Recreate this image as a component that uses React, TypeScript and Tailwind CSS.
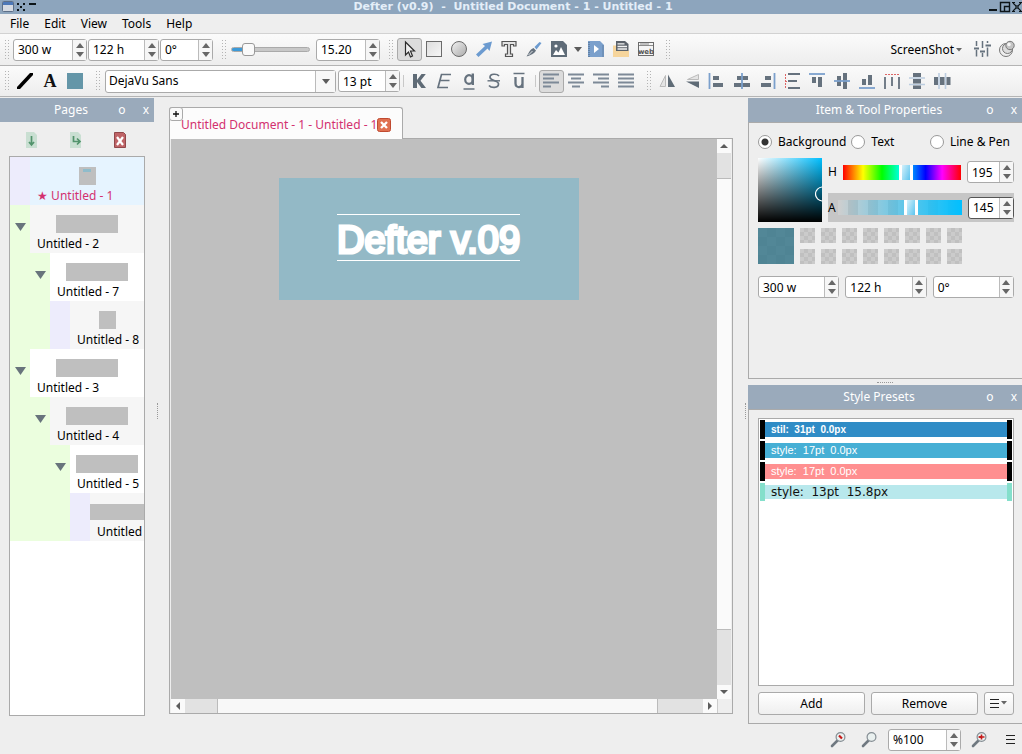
import type { ReactNode } from "react";

const STEEL = "#66727e";
const BLUE = "#7ba0cc";

function Grip() {
  return (
    <svg width="5" height="28" viewBox="0 0 5 28" className="shrink-0" aria-hidden="true">
      {[4, 7, 10, 13, 16, 19, 22].map((y) => (
        <g key={y} fill="#b4b4b4">
          <rect x="0" y={y} width="1" height="1" />
          <rect x="3" y={y} width="1" height="1" />
        </g>
      ))}
    </svg>
  );
}

function Spin({ value, label, className = "", focused = false }: { value: string; label: string; className?: string; focused?: boolean }) {
  return (
    <div className={`flex h-[22px] shrink-0 rounded-[3px] border bg-white ${focused ? "border-[#555]" : "border-[#aaa]"} ${className}`}>
      <input aria-label={label} defaultValue={value} className="w-0 min-w-0 flex-1 bg-transparent pt-px pl-1 text-xs outline-none" />
      <div className="flex w-3.5 flex-col border-l border-[#bbb] bg-[#f6f6f6]">
        <button aria-label={`Increase ${label}`} className="flex flex-1 items-end justify-center pb-[2px]">
          <svg width="8" height="5" viewBox="0 0 8 5"><path d="M4 0 8 5H0z" fill="#666" /></svg>
        </button>
        <button aria-label={`Decrease ${label}`} className="flex flex-1 items-start justify-center pt-[2px]">
          <svg width="8" height="5" viewBox="0 0 8 5"><path d="M0 0h8L4 5z" fill="#666" /></svg>
        </button>
      </div>
    </div>
  );
}

function Tool({ label, active = false, children }: { label: string; active?: boolean; children: ReactNode }) {
  return (
    <button
      aria-label={label}
      className={`flex h-[23px] w-[25px] shrink-0 items-center justify-center rounded-[3px] border ${active ? "border-[#aaa] bg-[#dcdcdc]" : "border-transparent"}`}
    >
      <svg width="19" height="19" viewBox="0 0 19 19" className="shrink-0">{children}</svg>
    </button>
  );
}

function Separator() {
  return <div className="mx-[3px] h-3 w-px shrink-0 bg-[#c8c8c8]" />;
}

function Caret() {
  return <svg width="8" height="5" viewBox="0 0 8 5" className="shrink-0"><path d="M0 0h8L4 5z" fill="#5c5c5c" /></svg>;
}

function TitleBar() {
  return (
    <header className="flex h-3.5 items-center bg-[#8da5bd]">
      <div className="flex w-20 items-center pl-[2px]">
        <svg width="36" height="14" viewBox="0 0 36 14">
          <rect x="0.5" y="1.5" width="11" height="10" rx="1" fill="#d4dae2" stroke="#5c6f88" />
          <rect x="1" y="2" width="10" height="3" fill="#4c78b8" />
          <g fill="#0c1418">
            <path d="M15 3h2v2h-2zM21 3h2v2h-2zM18 6h2v2h-2zM15 9h2v2h-2zM21 9h2v2h-2zM27 3h7v2h-7z" />
          </g>
        </svg>
      </div>
      <h1 className="flex-1 text-center font-['DejaVu_Sans',sans-serif] text-[11px] leading-[14px] font-bold whitespace-pre text-[#e4eef8]">
        {"Defter (v0.9)  -  Untitled Document - 1 - Untitled - 1"}
      </h1>
      <div className="flex w-[76px] justify-end">
        <svg width="33" height="14" viewBox="0 0 33 14" fill="none" stroke="#0c1418">
          <path d="M0 10h8" strokeWidth="2" />
          <path d="M11.500 2.500h9v9h-9zM15.500 11V6.500h5" strokeWidth="1.400" />
          <path d="m24 3 8 8m0-8-8 8" strokeWidth="1.200" />
          <path d="M23 2.500h3M30 2.500h3M23 11.500h3M30 11.500h3" />
          <rect x="27" y="6" width="2" height="2" fill="#8da5bd" />
        </svg>
      </div>
    </header>
  );
}

function MenuBar() {
  return (
    <nav className="flex h-5 items-center gap-[15px] border-b border-[#d2d2d2] pl-2.5 text-xs">
      {["File", "Edit", "View", "Tools", "Help"].map((m) => (
        <button key={m}>{m}</button>
      ))}
    </nav>
  );
}

const barClass = "flex items-center border-b border-[#b4b4b4] bg-linear-to-b from-[#fbfbfb] to-[#ededed] pl-[5px]";

function MainToolbar() {
  return (
    <div className={`h-8 ${barClass}`}>
      <Grip />
      <div className="ml-[3px] flex gap-px">
        <Spin value="300 w" label="Width" className="w-[74px]" />
        <Spin value="122 h" label="Height" className="w-[71px]" />
        <Spin value="0°" label="Rotation" className="w-[53px]" />
      </div>
      <div className="ml-[9px] flex items-center">
        <Grip />
        <input
          type="range"
          aria-label="Scale"
          min={0}
          max={100}
          step={0.1}
          defaultValue={15.2}
          className="ml-1 h-3.5 w-[79px] appearance-none bg-transparent [&::-webkit-slider-runnable-track]:h-[5px] [&::-webkit-slider-runnable-track]:rounded-full [&::-webkit-slider-runnable-track]:border [&::-webkit-slider-runnable-track]:border-[#aaa] [&::-webkit-slider-runnable-track]:bg-[linear-gradient(90deg,#3c9ad8_15px,#c8c8c8_15px)] [&::-webkit-slider-thumb]:-mt-[5px] [&::-webkit-slider-thumb]:h-[13px] [&::-webkit-slider-thumb]:w-[13px] [&::-webkit-slider-thumb]:appearance-none [&::-webkit-slider-thumb]:rounded-[3px] [&::-webkit-slider-thumb]:border [&::-webkit-slider-thumb]:border-[#999] [&::-webkit-slider-thumb]:bg-[#fafafa]"
        />
      </div>
      <Spin value="15.20" label="Scale value" className="ml-1.5 w-16" />
      <div className="ml-[9px] flex items-center gap-[3px]">
        <Grip />
        <div className="flex items-center">
          <Tool label="Select" active>
            <path d="M5.500 2v13l3-3 2 5 2-1-2-5h4z" fill="#f0f0f0" stroke="#2c2c2c" strokeWidth="1.200" />
          </Tool>
          <Tool label="Rectangle">
            <defs><linearGradient id="sq" x2="1" y2="1"><stop stopColor="#ddd" /><stop offset="1" stopColor="#f6f6f6" /></linearGradient></defs>
            <rect x="1.500" y="1.500" width="15" height="15" fill="url(#sq)" stroke="#6b6b6b" />
          </Tool>
          <Tool label="Ellipse">
            <defs><linearGradient id="ci" y2="1" x2="1"><stop stopColor="#f2f2f2" /><stop offset="1" stopColor="#aaa" /></linearGradient></defs>
            <circle cx="9" cy="9" r="7.500" fill="url(#ci)" stroke="#6b6b6b" />
          </Tool>
          <Tool label="Arrow">
            <path d="m1 14.500 9-8.500-2.500-2L17 1.500 14.500 11l-2-2.500-9 8.500z" fill="#6c9bd0" />
          </Tool>
          <Tool label="Text">
            <path d="M2 1.500h14V6h-2.500V4.500h-3v9.500h2v2.500h-7V14h2V4.500h-3V6H2z" fill="#e4e4e4" stroke="#555" strokeWidth="1.200" />
          </Tool>
          <Tool label="Brush">
            <path d="M9.500 7 14.500 2l2 1-5 6.500z" fill="#6c9bd0" />
            <path d="M8.500 8l2.500 2.500C9 14 6 15 1.500 16.500 4 13 4.500 9.500 8.500 8z" fill={STEEL} />
            <path d="M3.500 15 7.500 11" stroke="#fff" strokeWidth=".8" />
          </Tool>
          <Tool label="Image">
            <path d="M1 1h12l4 4v12H1z" fill="#5f6c78" />
            <circle cx="6" cy="6" r="1.600" fill="#fff" />
            <path d="m3 15 3-5 2.500 2.500L11 7l4 8z" fill="#fff" />
          </Tool>
          <button aria-label="Image options" className="flex h-5 w-3 items-center justify-center"><Caret /></button>
          <Tool label="Video">
            <path d="M1 1h12l4 4v12H1z" fill={BLUE} />
            <path d="M7 5v8l5-4z" fill="#fff" />
            <path d="M2 2v15M16 5.500v11" stroke="#4c6480" strokeDasharray="1 1" />
          </Tool>
          <Tool label="Document">
            <path d="M1 5.500h3v5h13V17H1z" fill="#f6d59c" />
            <path d="M4 1h9l3.500 3v7H4z" fill="#5b626a" />
            <path d="M5.500 3.800h7M5.500 6.500h9.500M5.500 9h9.500" stroke="#f2f2f2" strokeWidth="1.300" />
          </Tool>
          <Tool label="Web">
            <rect x="1.500" y="2.500" width="15" height="13" fill="#f5f5f5" stroke="#6b6b6b" />
            <path d="M2 5.500h14M3 4h9" stroke="#8b8b8b" />
            <text x="9" y="13.500" textAnchor="middle" fontFamily="DejaVu Sans, sans-serif" fontWeight="bold" fontSize="7" fill="#555">web</text>
          </Tool>
        </div>
      </div>
      <div className="ml-[7px]"><Grip /></div>
      <button className="mr-2 ml-auto flex items-center gap-[2px] pt-px text-xs">
        ScreenShot
        <svg width="6" height="4" viewBox="0 0 6 4"><path d="M0 0h6L3 3.500z" fill="#666" /></svg>
      </button>
      <div className="flex pr-[2px]">
        <Tool label="Settings">
          <path d="M3.500 1v5M3.500 10v6.500M9.500 1v7M9.500 13v4M14.500 1v2M14.500 7.500v9" stroke={STEEL} strokeWidth="1.500" />
          <path d="M1 8.500h5M7 11.500h5M12.500 5.500H18" stroke={STEEL} strokeWidth="2.200" />
        </Tool>
        <Tool label="Pin">
          <circle cx="8" cy="10" r="6.500" fill="#eee" stroke="#777" />
          <circle cx="9.500" cy="8.500" r="5" fill="#ddd" stroke="#777" />
          <circle cx="12" cy="5.500" r="4.200" fill="#c4c4c4" stroke="#777" />
          <circle cx="11" cy="4.500" r="1.800" fill="#f6f6f6" />
        </Tool>
      </div>
    </div>
  );
}

function FormatToolbar() {
  return (
    <div className={`mb-px h-[31px] ${barClass}`}>
      <Grip />
      <div className="mr-2 ml-[3px] flex">
        <Tool label="Line color"><path d="M1 17v-2L14 1h3v2L4 17z" fill="#000" /></Tool>
        <Tool label="Text color">
          <text x="9" y="15" textAnchor="middle" fontFamily="Liberation Serif, serif" fontWeight="bold" fontSize="18" fill="#111">A</text>
        </Tool>
        <Tool label="Fill color"><rect x="1" y="1" width="16" height="16" fill="#6496a8" /></Tool>
      </div>
      <Grip />
      <div className="relative ml-1 h-[23px] w-[231px] shrink-0 rounded-[3px] border border-[#aaa] bg-white">
        <select aria-label="Font" className="block h-[21px] w-full appearance-none bg-transparent pl-[3px] text-xs leading-5 outline-none">
          <option>DejaVu Sans</option>
        </select>
        <span className="pointer-events-none absolute inset-y-0 right-0 flex w-5 items-center justify-center border-l border-[#bbb] bg-[#f8f8f8]"><Caret /></span>
      </div>
      <Spin value="13 pt" label="Font size" className="ml-[2px] w-[62px]" />
      <Separator />
      <div className="flex">
        <Tool label="Bold"><path d="M3 2h4v6l4.500-6h4.300l-5.300 6.700L16 16h-4.600L7 10v6H3z" fill="#5f6b76" /></Tool>
        <Tool label="Italic"><path d="M16 2.500H6.500L3 15.500h10M5 8.500h9.500" stroke={STEEL} strokeWidth="1.700" fill="none" /></Tool>
        <Tool label="Underline">
          <path d="M3.500 17h11" stroke={STEEL} strokeWidth="1.500" />
          <path d="M12.800 1.500v11.500" stroke={STEEL} strokeWidth="2.400" />
          <ellipse cx="9" cy="7.500" rx="3.800" ry="4.300" stroke={STEEL} strokeWidth="2.200" fill="none" />
        </Tool>
        <Tool label="Strikethrough">
          <path d="M14 4C12 1.500 5 1.500 5 5.200 5 9 13.500 8 13.500 12c0 4.500-7.500 4-9.500 1.500" stroke={STEEL} strokeWidth="1.700" fill="none" />
          <path d="M2.500 8.800h12.500" stroke={STEEL} strokeWidth="1.400" />
        </Tool>
        <Tool label="Overline"><path d="M3.500 1.500h11" stroke={STEEL} strokeWidth="1.500" /><path d="M5.500 5v6.500c0 5 7 4.500 7 0V5v11" stroke={STEEL} strokeWidth="2.300" fill="none" /></Tool>
      </div>
      <Separator />
      <div className="mr-2 flex">
        <Tool label="Align left" active><path d="M1 2.500h16M1 6.500h11M1 10.500h16M1 14.500h8" stroke="#7d8997" strokeWidth="1.800" /></Tool>
        <Tool label="Align center"><path d="M1 2.500h16M4 6.500h10M1 10.500h16M5 14.500h8" stroke="#7d8997" strokeWidth="1.800" /></Tool>
        <Tool label="Align right"><path d="M1 2.500h16M6 6.500h11M1 10.500h16M9 14.500h8" stroke="#7d8997" strokeWidth="1.800" /></Tool>
        <Tool label="Justify"><path d="M1 2.500h16M1 6.500h16M1 10.500h16M1 14.500h16" stroke="#7d8997" strokeWidth="1.800" /></Tool>
      </div>
      <Grip />
      <div className="ml-[3px] flex">
        <Tool label="Mirror horizontally"><path d="M7.500 3.500v11H2z" fill="#e4e4e4" stroke="#bbb" /><path d="M10 2.500v12.500h7z" fill="#5f6b76" /></Tool>
        <Tool label="Mirror vertically"><path d="M15.500 2.500v5h-11z" fill="#e4e4e4" stroke="#bbb" /><path d="M16 9.500v6.500L3 9.500z" fill="#5f6b76" /></Tool>
        <Tool label="Align left edges"><path d="M1.500 1v16" stroke={BLUE} strokeWidth="1.800" /><path d="M5 4h6v4H5zM5 11h10v4H5z" fill={STEEL} /></Tool>
        <Tool label="Align horizontal centers"><path d="M4 4h11v4H4zM1 11h16v4H1z" fill={STEEL} /><path d="M9 1v16" stroke={BLUE} strokeWidth="1.800" /></Tool>
        <Tool label="Align right edges"><path d="M16.500 1v16" stroke={BLUE} strokeWidth="1.800" /><path d="M7 4h6v4H7zM3 11h10v4H3z" fill={STEEL} /></Tool>
        <Tool label="Space vertically"><path d="M2.500 2v15M2 9.500h3" stroke="#d66" strokeDasharray="2 1" /><path d="M5 2h12M5 9h9M5 16h12" stroke={STEEL} strokeWidth="1.800" /></Tool>
        <Tool label="Align top edges"><path d="M1 2h16" stroke={BLUE} strokeWidth="1.800" /><path d="M4 5h4v6H4zM10 5h4v10h-4z" fill={STEEL} /></Tool>
        <Tool label="Align vertical centers"><path d="M4 4h4v10H4zM10 1h4v16h-4z" fill={STEEL} /><path d="M1 9h16" stroke={BLUE} strokeWidth="1.800" /></Tool>
        <Tool label="Align bottom edges"><path d="M1 16h16" stroke={BLUE} strokeWidth="1.800" /><path d="M4 7h4v6H4zM10 3h4v10h-4z" fill={STEEL} /></Tool>
        <Tool label="Space horizontally"><path d="M2 2.500h15" stroke="#d66" strokeDasharray="2 1" /><path d="M2 5v12M9 5v9M16 5v12" stroke={STEEL} strokeWidth="1.800" /></Tool>
        <Tool label="Equal heights"><path d="M1 6h16M1 12.500h16" stroke="#bccde0" strokeWidth="1.600" /><path d="M5 1h8v4H5zM5 7h8v4.500H5zM5 13.500h8V17H5z" fill={STEEL} /></Tool>
        <Tool label="Equal widths"><path d="M6 1v16M12.500 1v16" stroke="#bccde0" strokeWidth="1.600" /><path d="M1 5h4v8H1zM7 5h4.500v8H7zM13.500 5h4v8h-4z" fill={STEEL} /></Tool>
      </div>
    </div>
  );
}

function DockHeader({ title }: { title: string }) {
  return (
    <div className="flex h-6 items-center bg-[#9aaabb] text-xs text-white">
      <h2 className="flex-1 pl-9 text-center">{title}</h2>
      <button aria-label={`Float ${title}`} className="w-8 text-center">o</button>
      <button aria-label={`Close ${title}`} className="w-4 text-center">x</button>
    </div>
  );
}

type Page = { name: string; depth: number; open?: boolean; current?: boolean; thumb: "wide" | "small" | "cut" };
const pages: Page[] = [
  { name: "★ Untitled - 1", depth: 0, current: true, thumb: "small" },
  { name: "Untitled - 2", depth: 0, open: true, thumb: "wide" },
  { name: "Untitled - 7", depth: 1, open: true, thumb: "wide" },
  { name: "Untitled - 8", depth: 2, thumb: "small" },
  { name: "Untitled - 3", depth: 0, open: true, thumb: "wide" },
  { name: "Untitled - 4", depth: 1, open: true, thumb: "wide" },
  { name: "Untitled - 5", depth: 2, open: true, thumb: "wide" },
  { name: "Untitled - 6", depth: 3, thumb: "cut" },
];

const thumbClass = {
  wide: "h-[18px] w-[62px] self-center",
  small: "flex h-[18px] w-[17px] justify-center self-center",
  cut: "mt-px mb-px h-4 w-[62px] -ml-[7px]",
};

function PagesDock() {
  return (
    <aside className="flex w-[154px] shrink-0 flex-col pb-2">
      <DockHeader title="Pages" />
      <div className="flex h-[34px] items-center gap-[23px] pt-[2px] pl-[21px]">
        <button aria-label="Add page">
          <svg width="21" height="18" viewBox="0 0 21 18"><path d="M5 1h8l3 3v13H5z" fill="#c9dfd2" /><path d="M10.500 5v9M8 11l2.500 3 2.500-3" stroke="#52936c" strokeWidth="1.700" fill="none" /></svg>
        </button>
        <button aria-label="Add sub page">
          <svg width="21" height="18" viewBox="0 0 21 18"><path d="M5 1h8l3 3v13H5z" fill="#c9dfd2" /><path d="M8.500 5v5.500h6M12 7.500l3 3-3 3" stroke="#52936c" strokeWidth="1.700" fill="none" /></svg>
        </button>
        <button aria-label="Remove page">
          <svg width="21" height="18" viewBox="0 0 21 18"><path d="M5.500 1.500h9l2 2v13h-11z" fill="#bf6467" stroke="#91484b" /><path d="m8 6 6 8m0-8-6 8" stroke="#fff" strokeWidth="2.200" /></svg>
        </button>
      </div>
      <ul className="mr-[9px] ml-[9px] flex-1 overflow-hidden border border-[#aaa] bg-white">
        {pages.map((p, i) => (
          <li key={p.name} className={`flex h-12 ${p.current ? "bg-[#e6f4ff]" : i % 2 ? "bg-[#f6f6f6]" : "bg-white"}`}>
            {Array.from({ length: p.depth }, (_, d) => <span key={d} className="w-5 shrink-0 bg-[#ebfede]" />)}
            {p.open ? (
              <button aria-label={`Collapse ${p.name}`} className="flex w-5 shrink-0 justify-center bg-[#ebfede] pt-[18px]">
                <svg width="11" height="8" viewBox="0 0 11 8"><path d="M0 0h11L5.500 8z" fill="#68747c" /></svg>
              </button>
            ) : (
              <span className="w-5 shrink-0 bg-[#edecfc]" />
            )}
            <div className="flex min-w-0 flex-1 flex-col overflow-hidden pt-2.5">
              <div className="flex flex-col px-[7px]">
                <span className={`shrink-0 bg-[#bfbfbf] ${thumbClass[p.thumb]}`}>
                  {p.current && <span className="mt-[2px] h-[3px] w-2 bg-[#8fbccb]" />}
                </span>
              </div>
              <span className={`mt-[3px] pl-[7px] text-xs leading-4 whitespace-nowrap ${p.current ? "text-[#d3316f]" : ""}`}>{p.name}</span>
            </div>
          </li>
        ))}
      </ul>
    </aside>
  );
}

function ScrollArrow({ d, label }: { d: string; label: string }) {
  return (
    <button aria-label={label} className="flex h-3.5 w-3.5 shrink-0 items-center justify-center bg-[#fafafa]">
      <svg width="8" height="8" viewBox="0 0 8 8"><path d={d} fill="#5c5c5c" /></svg>
    </button>
  );
}

function Workspace() {
  return (
    <main className="flex min-w-0 flex-1 flex-col pt-[9px] pb-2.5">
      <div className="relative flex h-[31px]">
        <div className="-mb-px flex w-[234px] items-center justify-between rounded-t-[3px] border border-b-0 border-[#aaa] bg-[#fcfcfc] pt-[2px] pr-[15px] pl-[11px]">
          <span className="text-xs whitespace-nowrap text-[#d3316f]">Untitled Document - 1 - Untitled - 1</span>
          <button aria-label="Close tab" className="shrink-0">
            <svg width="14" height="14" viewBox="0 0 14 14"><rect x=".5" y=".5" width="13" height="13" rx="2" fill="#e07050" stroke="#c04a30" /><path d="m4 4 6 6m0-6-6 6" stroke="#fff" strokeWidth="2.300" /></svg>
          </button>
        </div>
        <button aria-label="New tab" className="absolute top-0 left-0 flex h-3.5 w-3.5 items-center justify-center rounded-[3px] border border-[#aaa] bg-[#fafafa]">
          <svg width="6" height="6" viewBox="0 0 6 6"><path d="M3 0v6M0 3h6" stroke="#111" strokeWidth="1.300" /></svg>
        </button>
      </div>
      <div className="flex flex-1 flex-col border border-[#aaa] px-px">
        <div className="flex flex-1">
          <div className="flex-1 bg-[#bfbfbf] pt-[39px] pl-[108px]">
            <div className="flex h-[122px] w-[300px] flex-col items-start bg-[#93b9c6] pt-9 pl-[58px]">
              <div className="flex h-[47px] w-[183px] items-center justify-center border-y border-white font-['Liberation_Sans',sans-serif] text-[38px] leading-none whitespace-nowrap text-white [-webkit-text-stroke:3px_white]">
                <span className="pt-1">Defter v.09</span>
              </div>
            </div>
          </div>
          <div className="flex w-3.5 flex-col bg-[#e2e2e2]">
            <ScrollArrow label="Scroll up" d="M4 2 8 6H0z" />
            <div className="mt-[25px] mb-[55px] flex-1 border-y border-[#bbb] bg-[#fafafa]" />
            <ScrollArrow label="Scroll down" d="M0 2h8L4 6z" />
          </div>
        </div>
        <div className="flex h-3.5 bg-[#e2e2e2]">
          <ScrollArrow label="Scroll left" d="M6 0v8L2 4z" />
          <div className="mr-[45px] ml-8 flex-1 border-x border-[#bbb] bg-[#f8f8f8]" />
          <ScrollArrow label="Scroll right" d="M2 0v8l4-4z" />
          <div className="w-3.5 border-l border-[#ccc] bg-[#eee]" />
        </div>
      </div>
    </main>
  );
}

function Radio({ label, checked = false, className = "" }: { label: string; checked?: boolean; className?: string }) {
  return (
    <label className={`flex items-center gap-1.5 text-xs whitespace-nowrap ${className}`}>
      <input
        type="radio"
        name="target"
        defaultChecked={checked}
        className="h-3.5 w-3.5 shrink-0 appearance-none rounded-full border border-[#999] bg-white checked:bg-[radial-gradient(circle,#333_0_3px,white_4px)]"
      />
      {label}
    </label>
  );
}

const colorSlider =
  "h-[15px] min-w-0 flex-1 appearance-none [&::-webkit-slider-thumb]:h-[15px] [&::-webkit-slider-thumb]:w-3.5 [&::-webkit-slider-thumb]:appearance-none [&::-webkit-slider-thumb]:border-x-[3px] [&::-webkit-slider-thumb]:border-white [&::-webkit-slider-thumb]:bg-[linear-gradient(110deg,#d4f1fb,#5cc4ee)]";

const checker = "bg-[repeating-conic-gradient(#c0c0c0_0_25%,#cbcbcb_0_50%)] bg-[length:8px_8px]";

function PropertiesDock() {
  return (
    <section>
      <DockHeader title="Item & Tool Properties" />
      <div className="h-[257px] border border-[#aaa] border-r-0 pt-[11px] pr-2 pl-[9px]">
        <div className="flex h-4 items-center pr-1">
          <Radio label="Background" checked className="w-[95px]" />
          <Radio label="Text" className="w-20" />
          <Radio label="Line & Pen" />
        </div>
        <div className="mt-2 flex gap-1.5">
          <div className="flex h-16 w-16 shrink-0 items-center justify-end overflow-hidden bg-[linear-gradient(to_top,black,transparent),linear-gradient(to_right,white,#00bfff)]">
            <svg width="7" height="16" viewBox="0 0 7 16" className="mt-2"><circle cx="7.500" cy="8" r="7" fill="none" stroke="#fff" strokeWidth="1.200" /></svg>
          </div>
          <div className="flex min-w-0 flex-1 flex-col justify-between">
            <div className="mt-[3px] flex h-[22px] items-center">
              <label htmlFor="hue" className="w-[15px] text-xs">H</label>
              <input id="hue" type="range" min={0} max={359} defaultValue={195} className={`bg-[linear-gradient(90deg,red,yellow_17%,lime_33%,cyan_50%,blue_70%,magenta_84%,red)] ${colorSlider}`} />
              <Spin value="195" label="Hue value" className="ml-1.5 w-[47px]" />
            </div>
            <div className="flex h-[29px] items-center bg-[#c6c6c6]">
              <label htmlFor="alpha" className="w-2.5 text-xs">A</label>
              <input id="alpha" type="range" min={0} max={240} defaultValue={145} className={`bg-[linear-gradient(90deg,transparent,#00bfff),repeating-linear-gradient(90deg,#cfcfcf_0_10px,#c0c0c0_10px_20px)] ${colorSlider}`} />
              <Spin value="145" label="Alpha value" focused className="ml-1.5 w-[46px]" />
            </div>
          </div>
        </div>
        <div className="mt-1.5 flex gap-1.5">
          <div className="h-9 w-9 bg-[repeating-conic-gradient(#4f8494_0_25%,#528797_0_50%)] bg-[length:18px_18px]" />
          <div className="grid grid-cols-8 gap-1.5">
            {Array.from({ length: 16 }, (_, i) => <button key={i} aria-label={`Swatch ${i + 1}`} className={`h-[15px] w-[15px] ${checker}`} />)}
          </div>
        </div>
        <div className="mt-3 flex gap-1.5">
          <Spin value="300 w" label="Item width" className="flex-1" />
          <Spin value="122 h" label="Item height" className="flex-1" />
          <Spin value="0°" label="Item rotation" className="flex-1" />
        </div>
      </div>
    </section>
  );
}

const presets = [
  { text: "stil:  31pt  0.0px", bar: "h-[19px] border-black bg-[#2f8cc6]", font: "font-['Liberation_Sans',sans-serif] text-[10px] font-bold text-white" },
  { text: "style:  17pt  0.0px", bar: "h-[19px] border-black bg-[#46afd5]", font: "font-['Liberation_Sans',sans-serif] text-[11px] text-white" },
  { text: "style:  17pt  0.0px", bar: "h-[19px] border-black bg-[#ff8f90]", font: "font-['Liberation_Sans',sans-serif] text-[11px] text-white" },
  { text: "style:  13pt  15.8px", bar: "h-[18px] border-[#84dfcb] bg-[#b8e8ec]", font: "font-['DejaVu_Sans',sans-serif] text-xs text-[#111]" },
];

const buttonClass = "rounded-[3px] border border-[#aaa] bg-linear-to-b from-white to-[#efefef]";

function PresetsDock() {
  return (
    <section className="flex flex-1 flex-col">
      <DockHeader title="Style Presets" />
      <div className="flex flex-1 flex-col gap-1.5 border border-r-0 border-[#aaa] pt-2 pr-2 pb-2 pl-[9px]">
        <ul className="flex flex-1 flex-col gap-[2px] border border-[#aaa] bg-white p-px">
          {presets.map((p, i) => (
            <li key={i} className={`flex items-center border-x-[5px] border-y-0 bg-clip-content py-[2px] whitespace-pre ${p.bar}`}>
              <span className={`pl-1.5 leading-[15px] ${p.font}`}>{p.text}</span>
            </li>
          ))}
        </ul>
        <div className="flex h-[23px] gap-1.5 text-xs">
          <button className={`flex-1 ${buttonClass}`}>Add</button>
          <button className={`flex-1 ${buttonClass}`}>Remove</button>
          <button aria-label="Preset menu" className={`flex w-[30px] items-center justify-center ${buttonClass}`}>
            <svg width="18" height="11" viewBox="0 0 18 11"><path d="M0 1.500h9M0 5.500h9M0 9.500h9" stroke="#222" strokeWidth="1.100" /><path d="M11 3h6l-3 3.500z" fill="#666" /></svg>
          </button>
        </div>
      </div>
    </section>
  );
}

function ZoomButton({ label, mark }: { label: string; mark?: ReactNode }) {
  return (
    <button aria-label={label}>
      <svg width="17" height="17" viewBox="0 0 17 17">
        <path d="M2 15 8 9" stroke="#6f7880" strokeWidth="2.600" strokeLinecap="round" />
        <circle cx="10.500" cy="6" r="4.400" fill="#e9f0ef" stroke="#848d93" strokeWidth="1.200" />
        {mark}
      </svg>
    </button>
  );
}

function StatusBar() {
  return (
    <footer className="flex h-[30px] items-center justify-end gap-2.5 pt-px pr-[7px]">
      <div className="flex gap-[14px]">
        <ZoomButton label="Zoom out" mark={<path d="m9 4.500 3 3" stroke="#c61a1a" strokeWidth="2.200" />} />
        <ZoomButton label="Reset zoom" />
      </div>
      <Spin value="%100" label="Zoom" className="w-[73px]" />
      <ZoomButton label="Zoom in" mark={<path d="M7.500 6h6M10.500 3.500v5M9 5v2" stroke="#c61a1a" strokeWidth="1.600" />} />
      <button aria-label="Menu" className="pl-2">
        <svg width="9" height="11" viewBox="0 0 9 11"><path d="M0 1.500h9M0 5.500h9M0 9.500h9" stroke="#222" strokeWidth="1.200" /></svg>
      </button>
    </footer>
  );
}

export default function App() {
  return (
    <div className="flex min-h-screen w-full flex-col overflow-hidden bg-[#eee] font-['Noto_Sans',sans-serif] text-black">
      <TitleBar />
      <MenuBar />
      <MainToolbar />
      <FormatToolbar />
      <div className="flex flex-1">
        <PagesDock />
        <div className="flex w-[15px] shrink-0 items-center justify-start pl-[3px]">
          <div className="h-4 w-px border-l border-dotted border-[#999]" />
        </div>
        <Workspace />
        <div className="flex w-[15px] shrink-0 items-center justify-end pr-[2px]">
          <div className="h-4 w-px border-l border-dotted border-[#999]" />
        </div>
        <div className="flex w-[274px] shrink-0 flex-col">
          <PropertiesDock />
          <div className="flex h-1.5 items-center justify-center">
            <div className="h-px w-4 border-t border-dotted border-[#999]" />
          </div>
          <PresetsDock />
        </div>
      </div>
      <StatusBar />
    </div>
  );
}
